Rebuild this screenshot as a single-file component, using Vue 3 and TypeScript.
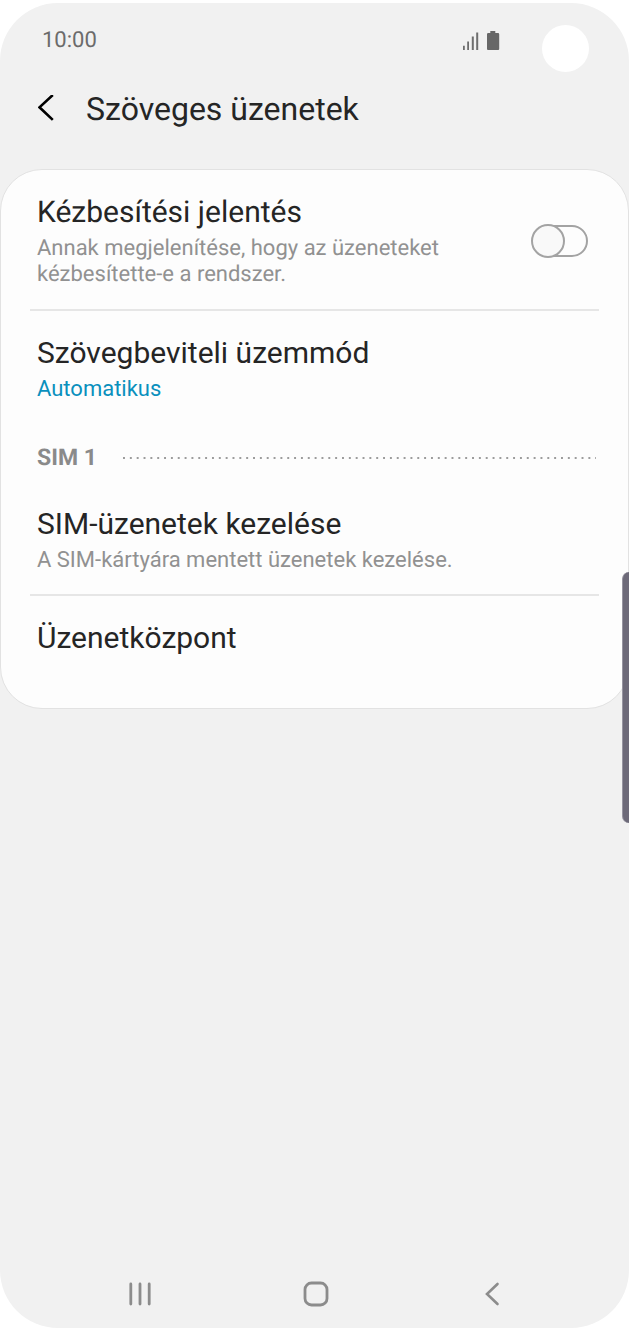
<script setup lang="ts">
import { ref } from 'vue'

const deliveryReport = ref(false)
</script>

<template>
  <div class="screen">
    <div class="status">
      <span class="time">10:00</span>
      <svg class="status-icons" width="38" height="22" viewBox="0 0 38 22" aria-hidden="true">
        <path d="M1 15.800h1.800V20H1zM5.200 11.400H7V20H5.200zM9.800 6.500h2V20h-2zM14.200 2.500h2V20h-2z" fill="#6e6e6e" />
        <path d="M28.300 1h5v2H36q1.200 0 1.200 1.200V19q0 1-1 1H26q-1 0-1-1V4.200Q25 3 26.200 3h2.100z" fill="#676767" />
      </svg>
      <span class="camera"></span>
    </div>

    <header class="header">
      <button class="back" type="button" aria-label="Vissza">
        <svg width="18" height="28" viewBox="0 0 18 28" aria-hidden="true">
          <path d="M14.800 0L1.500 12.300l13.300 12.600" fill="none" stroke="#000" stroke-width="2.600" />
        </svg>
      </button>
      <h1>Szöveges üzenetek</h1>
    </header>

    <main class="card">
      <label class="row">
        <span class="texts">
          <span class="title">Kézbesítési jelentés</span>
          <span class="sub narrow">Annak megjelenítése, hogy az üzeneteket kézbesítette-e a rendszer.</span>
        </span>
        <input v-model="deliveryReport" class="switch" type="checkbox" role="switch" />
      </label>
      <hr />
      <button class="row" type="button">
        <span class="texts">
          <span class="title">Szövegbeviteli üzemmód</span>
          <span class="sub accent">Automatikus</span>
        </span>
      </button>
      <div class="section">
        <h2>SIM 1</h2>
        <span class="dots"></span>
      </div>
      <button class="row" type="button">
        <span class="texts">
          <span class="title">SIM-üzenetek kezelése</span>
          <span class="sub">A SIM-kártyára mentett üzenetek kezelése.</span>
        </span>
      </button>
      <hr />
      <button class="row last" type="button">
        <span class="title">Üzenetközpont</span>
      </button>
    </main>

    <nav class="nav">
      <button type="button" aria-label="Legutóbbiak">
        <svg width="26" height="26" viewBox="0 0 26 26" aria-hidden="true">
          <path d="M3.800 3v20M13 3v20M22.200 3v20" fill="none" stroke="#8c8c8c" stroke-width="2.800" stroke-linecap="round" />
        </svg>
      </button>
      <button type="button" aria-label="Kezdőképernyő">
        <svg width="26" height="26" viewBox="0 0 26 26" aria-hidden="true">
          <rect x="2" y="2" width="22" height="22" rx="6.500" fill="none" stroke="#8c8c8c" stroke-width="2.800" />
        </svg>
      </button>
      <button type="button" aria-label="Vissza">
        <svg width="26" height="26" viewBox="0 0 26 26" aria-hidden="true">
          <path d="M18.500 3L8 13l10.500 10" fill="none" stroke="#8c8c8c" stroke-width="2.600" stroke-linecap="round" />
        </svg>
      </button>
    </nav>

    <span class="edge-handle"></span>
  </div>
</template>

<style>
body {
  margin: 0;
  background: #fff;
}
</style>

<style scoped>
.screen {
  position: relative;
  box-sizing: border-box;
  display: flex;
  flex-direction: column;
  min-height: calc(100vh - 3px);
  margin-top: 3px;
  overflow: hidden;
  border-radius: 58px;
  background: #f1f1f1;
  color: #252525;
  font-family: Roboto, "Noto Sans", sans-serif;
  text-rendering: geometricPrecision;
}

button {
  margin: 0;
  padding: 0;
  border: 0;
  background: none;
  color: inherit;
  font: inherit;
  text-align: left;
  cursor: pointer;
}

svg {
  display: block;
}

.status {
  display: flex;
  align-items: center;
  height: 76px;
  padding: 0 40px 0 42px;
}

.time {
  flex: 1;
  color: #6b6b6b;
  font-size: 22px;
  line-height: 28px;
}

.status-icons {
  margin-right: 42px;
}

.camera {
  width: 47px;
  height: 47px;
  margin-top: 15px;
  border-radius: 50%;
  background: #fff;
}

.header {
  display: flex;
  align-items: center;
  gap: 30px;
  height: 60px;
  padding: 0 38px;
  margin-bottom: 30px;
}

h1 {
  margin: 0;
  font-size: 32px;
  line-height: 40px;
  font-weight: 400;
}

.card {
  box-sizing: border-box;
  padding: 23px 29px 36px;
  border: 1px solid #e2e2e2;
  border-radius: 42px;
  background: #fdfdfd;
}

.row {
  display: flex;
  align-items: center;
  justify-content: space-between;
  box-sizing: border-box;
  width: 100%;
  padding: 0 11px 21px 7px;
  cursor: pointer;
}

.texts {
  display: flex;
  flex-direction: column;
  gap: 3px;
}

.title {
  font-size: 30px;
  line-height: 40px;
}

.sub {
  color: #919191;
  font-size: 22px;
  line-height: 26px;
}

.narrow {
  max-width: 440px;
}

.accent {
  color: #0a90bd;
}

hr {
  height: 2px;
  margin: 0 0 22px;
  border: 0;
  background: #e6e6e6;
}

.switch {
  position: relative;
  flex: none;
  appearance: none;
  box-sizing: border-box;
  width: 56px;
  height: 32px;
  margin: 0;
  border: 2px solid #a3a3a3;
  border-radius: 16px;
  background: #fdfdfd;
  cursor: pointer;
}

.switch::before {
  content: "";
  position: absolute;
  top: -3px;
  left: -3px;
  box-sizing: border-box;
  width: 34px;
  height: 34px;
  border: 2px solid #a3a3a3;
  border-radius: 50%;
  background: #f9f9f9;
}

.switch:checked::before {
  right: -3px;
  left: auto;
}

.section {
  display: flex;
  align-items: center;
  gap: 26px;
  padding: 21px 3px 32px 7px;
}

h2 {
  margin: 0;
  color: #8a8a8a;
  font-size: 23px;
  line-height: 28px;
  font-weight: 700;
}

.dots {
  flex: 1;
  height: 2px;
  background: linear-gradient(90deg, #9c9c9c 2px, transparent 2px) 0 0 / calc(100% / 69) 2px;
}

.last {
  padding-bottom: 14px;
}

.nav {
  display: flex;
  justify-content: space-between;
  padding: 0 124px 21px 127px;
  margin-top: auto;
}

.edge-handle {
  position: absolute;
  top: 569px;
  right: 0;
  box-sizing: border-box;
  width: 7px;
  height: 251px;
  border-left: 1px solid #9694a0;
  border-radius: 7px 0 0 7px;
  background: #6d6a79;
}
</style>
